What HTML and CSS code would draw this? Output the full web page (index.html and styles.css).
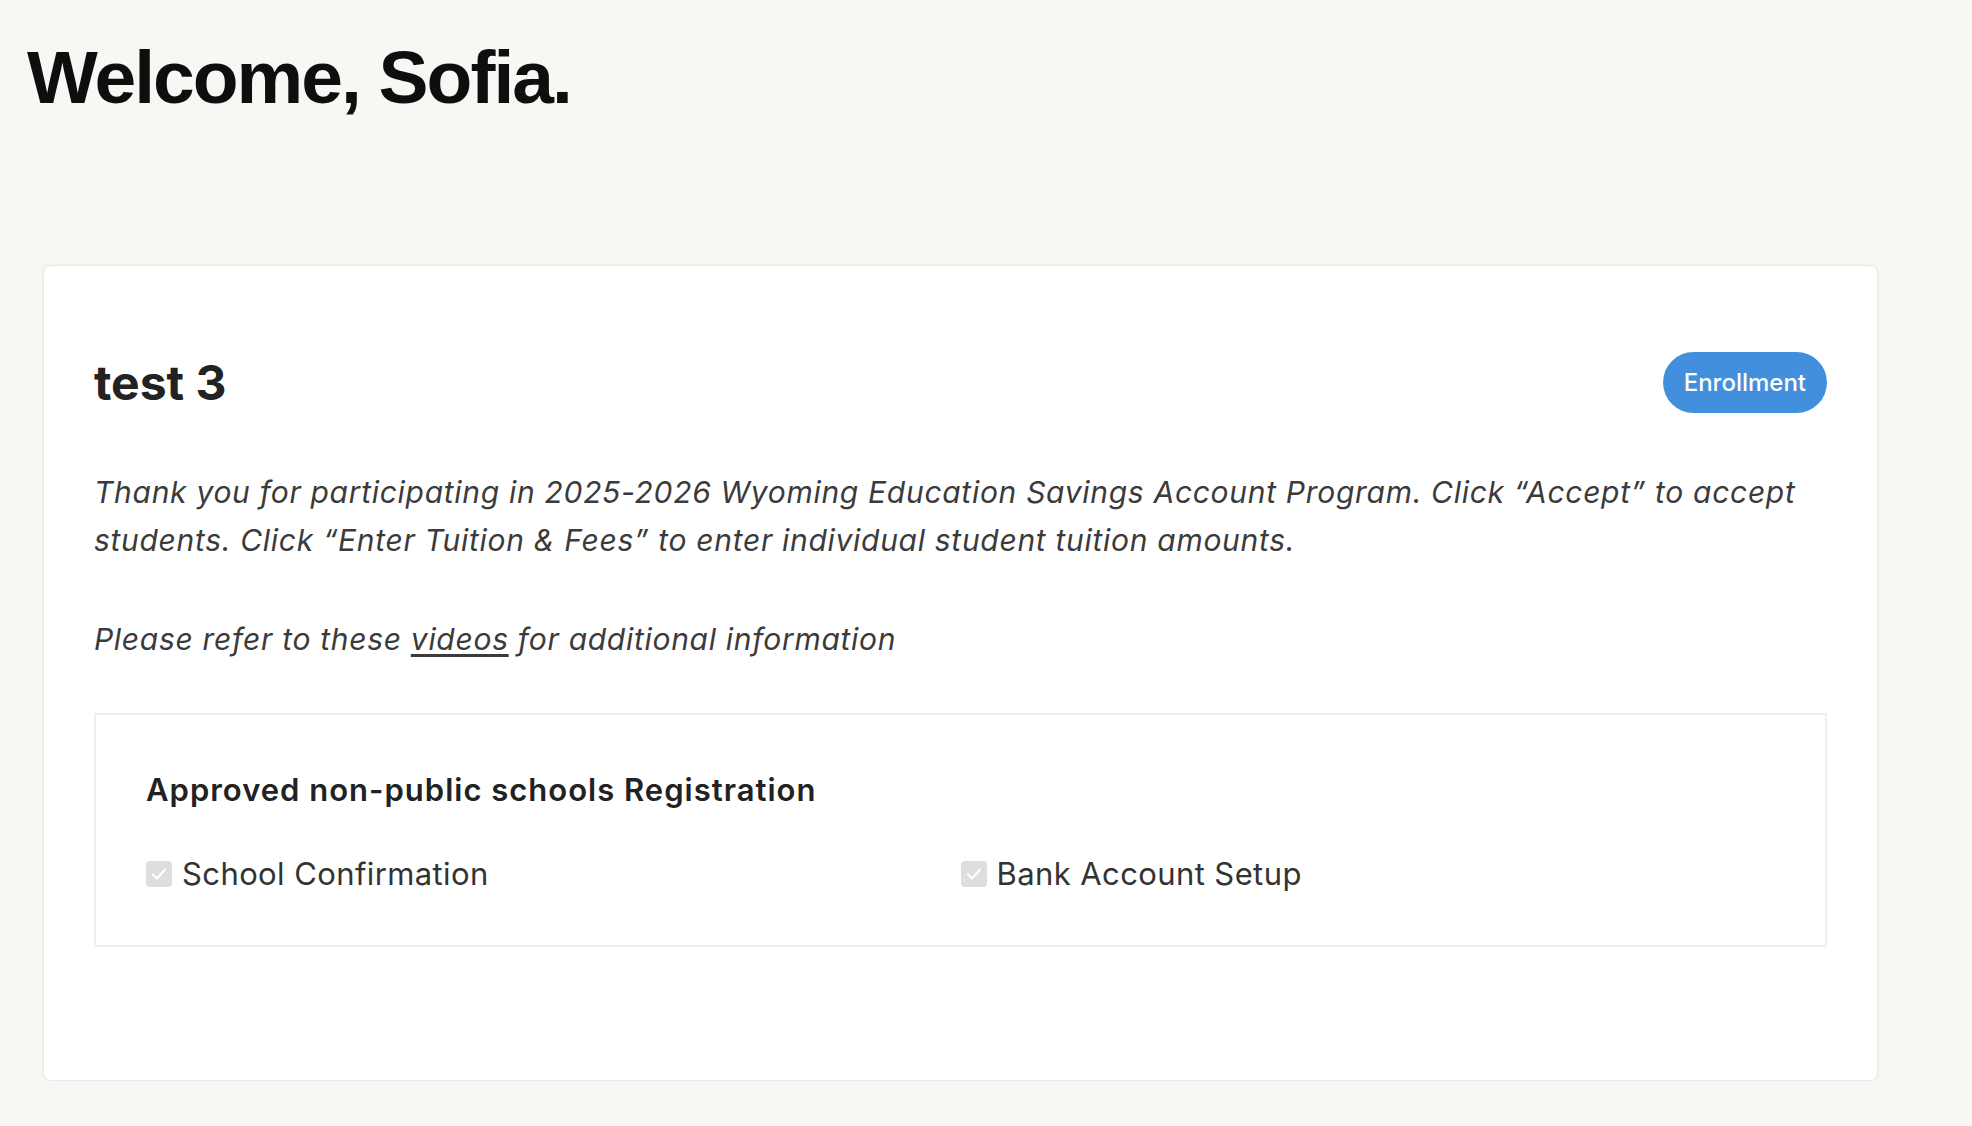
FILE: index.html
```html
<!DOCTYPE html>
<html lang="en">
<head>
    <meta charset="UTF-8">
    <meta name="viewport" content="width=device-width, initial-scale=1.0">
    <link rel="stylesheet" href="styles.css">
    <title>Dashboard</title>
</head>
<body>
    <h1 class="welcome">Welcome, Sofia.</h1>

    <div class="card">
        <div class="card-head">
            <h2>test 3</h2>
            <span class="pill">Enrollment</span>
        </div>
        <p class="note">Thank you for participating in 2025-2026 Wyoming Education Savings Account Program. Click “Accept” to accept students. Click “Enter Tuition &amp; Fees” to enter individual student tuition amounts.</p>
        <p class="note">Please refer to these <a href="#">videos</a> for additional information</p>

        <div class="steps">
            <h3>Approved non-public schools Registration</h3>
            <div class="step-list">
                <label class="step">
                    <span class="box"><svg viewBox="0 0 26 26" width="26" height="26"><path d="M7 13.5l4 4 8-9" fill="none" stroke="#fff" stroke-width="2.2" stroke-linecap="round" stroke-linejoin="round"/></svg></span>
                    School Confirmation
                </label>
                <label class="step">
                    <span class="box"><svg viewBox="0 0 26 26" width="26" height="26"><path d="M7 13.5l4 4 8-9" fill="none" stroke="#fff" stroke-width="2.2" stroke-linecap="round" stroke-linejoin="round"/></svg></span>
                    Bank Account Setup
                </label>
            </div>
        </div>
    </div>
</body>
</html>
```
FILE: styles.css
```css
body{
    margin: 0;
    background: #f8f7f4;
    font-family: Inter, "Noto Sans", sans-serif;
    color: #222;
}
.welcome{
    margin: 34px 0 0 27px;
    font-family: "Liberation Sans", Arial, sans-serif;
    font-size: 75px;
    font-weight: 700;
    letter-spacing: -2px;
    line-height: normal;
    color: #0e0e0e;
}
.card{
    width: 1835px;
    box-sizing: border-box;
    margin: 145px 0 0 43px;
    padding: 86px 50px 133px 50px;
    background: #fff;
    border: 1px solid #e9e9e9;
    border-radius: 8px;
    box-shadow: 0 0 4px 0 rgba(0,0,0,0.05);
}
.card-head{
    display: flex;
    align-items: center;
    justify-content: space-between;
}
.card-head h2{
    margin: 0;
    font-size: 48px;
    font-weight: 700;
    line-height: 1.25;
    color: #222;
}
.pill{
    display: inline-block;
    height: 61px;
    line-height: 61px;
    padding: 0 21px;
    border-radius: 31px;
    background: #4290dd;
    color: #fff;
    font-size: 24px;
    font-weight: 500;
}
.note{
    margin: 55px 0 0 0;
    font-size: 30px;
    font-style: italic;
    letter-spacing: 0.7px;
    line-height: 48px;
    color: #3b3b3b;
}
.note + .note{
    margin-top: 51px;
}
.note a{
    color: #3b3b3b;
    text-decoration: underline;
    text-underline-offset: 4px;
}
.steps{
    margin-top: 50px;
    padding: 57px 50px 53px 50px;
    border: 2px solid #efefef;
}
.steps h3{
    margin: 0;
    font-size: 31px;
    font-weight: 600;
    letter-spacing: 1px;
    line-height: 36px;
    color: #222;
}
.step-list{
    display: grid;
    grid-template-columns: 1fr 1fr;
    margin-top: 47px;
}
.step{
    display: flex;
    align-items: center;
    gap: 10px;
    font-size: 31px;
    letter-spacing: 0.4px;
    line-height: 37px;
    color: #333;
}
.box{
    display: inline-flex;
    width: 26px;
    height: 26px;
    border-radius: 4px;
    background: #dedede;
}
```
